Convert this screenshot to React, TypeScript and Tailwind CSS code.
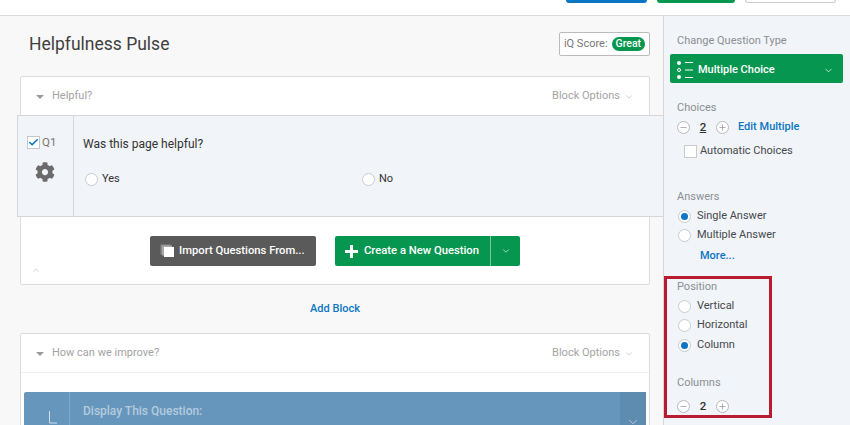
import React from 'react';
import { ChevronDown, ChevronUp, Minus, Plus, Check } from 'lucide-react';
import { FaCog } from 'react-icons/fa';

function Radio({ on = false }: { on?: boolean }) {
  return (
    <span className="flex h-[13px] w-[13px] shrink-0 items-center justify-center rounded-full border border-[#c8ccd0] bg-white">
      {on && <span className="h-[7px] w-[7px] rounded-full bg-[#0b76c4]" />}
    </span>
  );
}

function RadioRow({ label, on }: { label: string; on?: boolean }) {
  return (
    <div className="flex h-[19.5px] items-center gap-[6px] pl-[1px] text-[11px] text-[#45494d]">
      <Radio on={on} />
      <span>{label}</span>
    </div>
  );
}

function Stepper({ value, underlined }: { value: number; underlined?: boolean }) {
  return (
    <div className="flex items-center">
      <span className="flex h-[13px] w-[13px] items-center justify-center rounded-full border border-[#b5b9bd] bg-white text-[#777]">
        <Minus size={9} strokeWidth={1.5} />
      </span>
      <span className={`w-[26px] text-center text-[11.5px] font-medium text-[#333] ${underlined ? 'underline' : ''}`}>{value}</span>
      <span className="flex h-[13px] w-[13px] items-center justify-center rounded-full border border-[#b5b9bd] bg-white text-[#777]">
        <Plus size={9} strokeWidth={1.5} />
      </span>
    </div>
  );
}

function BlockHeader({ title }: { title: string }) {
  return (
    <div className="flex h-[38px] items-center justify-between pt-[1px] pl-[15px] pr-[15px] text-[11px] text-[#a3a3a3]">
      <div className="flex items-center gap-[8px]">
        <span className="h-0 w-0 border-x-[4px] border-t-[4px] border-x-transparent border-t-[#999]" />
        <span>{title}</span>
      </div>
      <div className="flex items-center gap-[4px]">
        <span>Block Options</span>
        <ChevronDown size={10} strokeWidth={1.25} />
      </div>
    </div>
  );
}

function SideLabel({ children }: { children: React.ReactNode }) {
  return <div className="text-[11px] leading-[14px] text-[#8b8f94]">{children}</div>;
}

export default function App() {
  return (
    <div className="relative flex h-[425px] w-[850px] flex-col overflow-hidden bg-white font-['Roboto',sans-serif]">
      {/* top bar, buttons cut off by the crop */}
      <div className="h-[16px] shrink-0 border-b border-[#dcdcdc] bg-white">
        <div className="flex h-[3px] items-start pl-[566px]">
          <div className="h-[3px] w-[81px] rounded-b-[3px] bg-[#0b76c4]" />
          <div className="ml-[10px] h-[3px] w-[78px] rounded-b-[3px] bg-[#07964f]" />
          <div className="ml-[10px] h-[3px] w-[91px] rounded-b-[3px] border border-t-0 border-[#ccc] bg-white" />
        </div>
      </div>

      <div className="flex min-h-0 flex-1">
        {/* survey canvas */}
        <div className="w-[664px] shrink-0 border-r border-[#d4d6d8] bg-[#f8f8f8] pl-[20px] pr-[13px]">
          <div className="flex h-[60px] items-center justify-between pb-[4px]">
            <h1 className="pl-[9px] text-[17.5px] font-normal text-[#3f3f3f]">Helpfulness Pulse</h1>
            <div className="flex h-[24px] w-[91px] items-center justify-center gap-[4px] rounded-[2px] border border-[#bbb] bg-white text-[11px] text-[#777]">
              <span>iQ Score:</span>
              <span className="rounded-full bg-[#07964f] px-[4px] text-[10.5px] leading-[14px] font-medium text-white">Great</span>
            </div>
          </div>

          <div className="rounded-[2px] border border-[#dcdcdc] bg-white">
            <BlockHeader title="Helpful?" />
            {/* question spills past the block on both sides */}
            <div className="relative -mr-[14px] -ml-[4px] flex h-[102px] border border-r-0 border-[#d4d6d8] bg-[#f1f4f8]">
              <div className="flex w-[56px] shrink-0 flex-col items-start border-r border-[#d4d6d8] pt-[19px] pl-[9px]">
                <div className="flex items-center gap-[2px]">
                  <span className="flex h-[13px] w-[13px] items-center justify-center border border-[#c4c8cc] bg-white text-[#0b76c4]">
                    <Check size={11} strokeWidth={3.5} />
                  </span>
                  <span className="text-[11.5px] leading-[14px] text-[#777]">Q1</span>
                </div>
                <FaCog className="mt-[13px] ml-[8px] text-[#6b6b6b]" size={20} />
              </div>
              <div className="flex-1 pl-[9px]">
                <div className="mt-[20px] text-[12px] leading-[16px] text-[#333]">Was this page helpful?</div>
                <div className="mt-[19px] flex pl-[2px] text-[11px] text-[#333]">
                  <div className="flex w-[277px] items-center gap-[4px]">
                    <Radio />
                    <span>Yes</span>
                  </div>
                  <div className="flex items-center gap-[4px]">
                    <Radio />
                    <span>No</span>
                  </div>
                </div>
              </div>
            </div>
            <div className="relative h-[67px]">
              <div className="flex justify-center gap-[19px] pt-[19px]">
                <div className="flex h-[30px] w-[166px] items-center gap-[4px] rounded-[2px] bg-[#5a5a5a] pl-[10px] text-[11.25px] font-medium text-white">
                  <svg width="15" height="14" viewBox="0 0 15 14">
                    <rect x="0.5" y="0.5" width="10" height="10" fill="#8a8a8a" />
                    <rect x="2" y="1.500" width="10" height="10" fill="#a8a8a8" />
                    <rect x="4" y="3" width="10" height="10" fill="#fff" />
                  </svg>
                  <span className="pt-[1px]">Import Questions From...</span>
                </div>
                <div className="flex h-[30px] w-[185px] rounded-[2px] bg-[#07964f] text-[11.25px] font-medium text-white">
                  <div className="flex flex-1 items-center gap-[6px] border-r border-[#7cc7a0] pl-[10px]">
                    <svg width="13" height="13" viewBox="0 0 13 13">
                      <path d="M5 0h3v5h5v3H8v5H5V8H0V5h5z" fill="#fff" />
                    </svg>
                    <span className="pt-[1px]">Create a New Question</span>
                  </div>
                  <div className="flex w-[29px] items-center justify-center">
                    <ChevronDown size={10} strokeWidth={1.5} />
                  </div>
                </div>
              </div>
              <ChevronUp size={10} strokeWidth={1.25} className="absolute bottom-[9px] left-[10px] text-[#aaa]" />
            </div>
          </div>

          <div className="flex h-[48px] items-center justify-center pt-[1px] text-[11px] font-medium text-[#0b76c4]">Add Block</div>

          <div className="rounded-[2px] border border-[#dcdcdc] bg-white">
            <BlockHeader title="How can we improve?" />
            <div className="border-t border-[#f1f1f1] px-[3px] pt-[19px]">
              <div className="flex h-[80px] rounded-[2px] bg-[#6796bc]">
                <div className="relative w-[46px] border-r border-[#84a9c8]">
                  <svg width="12" height="16" viewBox="0 0 12 16" className="absolute top-[19px] left-[25px]">
                    <path d="M0.5 0v12M0.500 12H8" stroke="#cfdde9" fill="none" />
                  </svg>
                </div>
                <div className="flex-1 pt-[10px] pl-[13px] text-[12px] font-medium text-[#b4cbde]">Display This Question:</div>
                <div className="flex w-[26px] justify-center bg-[#5e8bb0] pt-[23px] text-[#d5e2ed]">
                  <ChevronDown size={14} strokeWidth={1.25} />
                </div>
              </div>
            </div>
          </div>
        </div>

        {/* question options sidebar */}
        <div className="flex-1 bg-[#f1f4f8] pt-[18px] pl-[6px] pr-[7px]">
          <div className="pl-[7px]"><SideLabel>Change Question Type</SideLabel></div>
          <div className="mt-[6px] flex h-[29px] items-center rounded-[2px] bg-[#07964f] pl-[7px] pr-[9px] pt-[3px] text-[11px] font-medium text-white">
            <svg width="16" height="20" viewBox="0 0 16 20" className="shrink-0">
              <circle cx="2" cy="3" r="2" fill="#fff" />
              <circle cx="2" cy="10" r="1.5" fill="none" stroke="#fff" />
              <circle cx="2" cy="17" r="2" fill="#fff" />
              <path d="M8 2.500h8M8 10h8M8 17.500h8" stroke="#fff" strokeWidth="1" />
            </svg>
            <span className="ml-[5px] flex-1">Multiple Choice</span>
            <ChevronDown size={11} strokeWidth={1.5} />
          </div>

          <div className="mt-[18px] pl-[7px]">
            <SideLabel>Choices</SideLabel>
            <div className="mt-[4px] flex items-center">
              <Stepper value={2} underlined />
              <span className="ml-[9px] text-[11px] font-medium text-[#0b76c4]">Edit Multiple</span>
            </div>
            <div className="mt-[7px] flex items-center gap-[3px] pl-[7px] text-[11px] text-[#45494d]">
              <span className="h-[13px] w-[13px] border border-[#c8ccd0] bg-white" />
              <span>Automatic Choices</span>
            </div>
          </div>

          <div className="mt-[30px] pl-[7px]">
            <SideLabel>Answers</SideLabel>
            <div className="mt-[2.5px]">
              <RadioRow label="Single Answer" on />
              <RadioRow label="Multiple Answer" />
            </div>
            <div className="mt-[3px] pl-[23px] text-[11px] font-medium text-[#0b76c4]">More...</div>
          </div>

          <div className="mt-[15.5px] pl-[7px]">
            <SideLabel>Position</SideLabel>
            <div className="mt-[2px]">
              <RadioRow label="Vertical" />
              <RadioRow label="Horizontal" />
              <RadioRow label="Column" on />
            </div>
            <div className="mt-[21px]">
              <SideLabel>Columns</SideLabel>
            </div>
            <div className="mt-[8px]">
              <Stepper value={2} />
            </div>
          </div>
        </div>
      </div>

      {/* annotation around the position settings */}
      <div className="absolute top-[276px] left-[664px] h-[142px] w-[108px] border-[3px] border-[#b81c2e]" />
    </div>
  );
}
